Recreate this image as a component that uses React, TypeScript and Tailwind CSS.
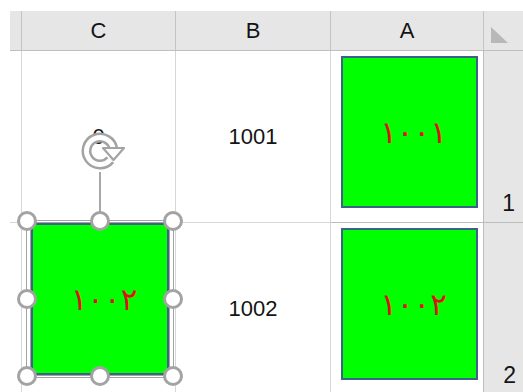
import React from "react";

const latin = { fontFamily: '"Liberation Sans", Arial, sans-serif' };
const arabic = { fontFamily: '"DejaVu Sans", "Noto Sans", sans-serif' };

function GreenBox({ label, className = "" }: { label: string; className?: string }) {
  return (
    <div
      className={`flex items-center justify-center border-2 border-[#3d6188] bg-[#00ff00] ${className}`}
    >
      <span
        className="pl-[8px] text-[31px] leading-none tracking-[8px] text-[#e01010]"
        style={arabic}
      >
        {label}
      </span>
    </div>
  );
}

function Handle({ className }: { className: string }) {
  return (
    <div
      className={`absolute h-[20px] w-[20px] -translate-x-1/2 -translate-y-1/2 rounded-full border-[3px] border-[#a3a3a3] bg-white ${className}`}
    />
  );
}

function RotateIcon() {
  return (
    <svg
      width="60"
      height="50"
      viewBox="0 0 60 50"
      className="absolute left-[75px] top-[129px]"
    >
      <path
        d="M35.34 30.68 A13.5 13.5 0 1 1 38.37 20.12"
        fill="none"
        stroke="#a3a3a3"
        strokeWidth="10"
      />
      <path
        d="M35.34 30.68 A13.5 13.5 0 1 1 38.37 20.12"
        fill="none"
        stroke="#ffffff"
        strokeWidth="5"
      />
      <polygon
        points="28,19 49,19 38.5,31"
        fill="#ffffff"
        stroke="#a3a3a3"
        strokeWidth="2.2"
        strokeLinejoin="round"
      />
    </svg>
  );
}

export default function App() {
  return (
    <div className="relative h-[392px] w-[523px] overflow-hidden bg-white text-[#141414]" style={latin}>
      <div className="pl-[10px] pt-[11px]">
        {/* column headers */}
        <div className="flex h-[40px] border-b border-[#bfbfbf] bg-[#e6e6e6] text-[22px]">
          <div className="w-[12px] border-r border-[#c4c4c4]" />
          <div className="flex w-[154px] items-center justify-center border-r border-[#c4c4c4]">C</div>
          <div className="flex w-[155px] items-center justify-center border-r border-[#c4c4c4]">B</div>
          <div className="flex w-[153px] items-center justify-center border-r border-[#c4c4c4]">A</div>
          <div className="flex flex-1 items-start pl-[7px] pt-[16px]">
            <svg width="18" height="17" viewBox="0 0 18 17">
              <polygon points="0,0 0,16 17,16" fill="#b8b8b8" />
            </svg>
          </div>
        </div>

        {/* row 1 */}
        <div className="flex h-[172px] text-[22px]">
          <div className="w-[12px] border-b border-r border-[#d6d6d6]" />
          <div className="flex w-[154px] items-center justify-center border-b border-r border-[#d6d6d6]">0</div>
          <div className="flex w-[155px] items-center justify-center border-b border-r border-[#d6d6d6]">1001</div>
          <div className="w-[153px] border-b border-r border-[#bcbcbc] pl-[10px] pt-[5px]">
            <GreenBox label="١٠٠١" className="h-[152px] w-[137px]" />
          </div>
          <div className="flex flex-1 items-end justify-end border-b border-[#bcbcbc] bg-[#e6e6e6] pb-[2px] pr-[8px] text-[23px]">
            1
          </div>
        </div>

        {/* row 2 */}
        <div className="flex h-[171px] text-[22px]">
          <div className="w-[12px] border-r border-[#d6d6d6]" />
          <div className="w-[154px] border-r border-[#d6d6d6]" />
          <div className="flex w-[155px] items-center justify-center border-r border-[#d6d6d6]">1002</div>
          <div className="w-[153px] border-r border-[#bcbcbc] pl-[10px] pt-[5px]">
            <GreenBox label="١٠٠٢" className="h-[152px] w-[137px]" />
          </div>
          <div className="flex flex-1 items-end justify-end bg-[#e6e6e6] pb-[2px] pr-[7px] text-[23px]">
            2
          </div>
        </div>
      </div>

      {/* selected shape in C2 */}
      <RotateIcon />
      <div className="absolute left-[99px] top-[172px] h-[40px] w-[2px] bg-[#a8a8a8]" />
      <div className="absolute left-[26px] top-[220px] h-[158px] w-[148px] border border-[#a3a3a3] bg-white px-[3px] py-[1px]">
        <div className="h-full w-full border border-[#a3a3a3]">
          <GreenBox label="١٠٠٢" className="h-full w-full" />
        </div>
      </div>
      <Handle className="left-[27px] top-[221px]" />
      <Handle className="left-[100px] top-[221px]" />
      <Handle className="left-[173px] top-[221px]" />
      <Handle className="left-[27px] top-[299px]" />
      <Handle className="left-[173px] top-[299px]" />
      <Handle className="left-[27px] top-[376px]" />
      <Handle className="left-[100px] top-[376px]" />
      <Handle className="left-[173px] top-[376px]" />
    </div>
  );
}
